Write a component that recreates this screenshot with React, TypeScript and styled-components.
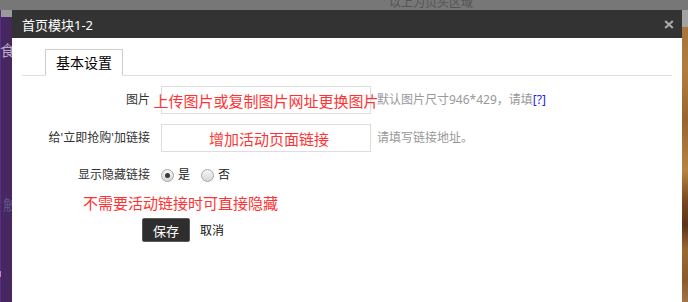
import React, { useState } from 'react';
import styled, { createGlobalStyle } from 'styled-components';

const GlobalStyle = createGlobalStyle`
  html, body {
    margin: 0;
    padding: 0;
    background: #ffffff;
  }
  body {
    font-family: "Noto Sans", "Noto Sans CJK SC", sans-serif;
    font-size: 12px;
    color: #333333;
  }
`;

const Page = styled.div`
  width: 688px;
  height: 302px;
  overflow: hidden;
  display: grid;
  grid-template-rows: 10px 1fr;
`;

const TopStrip = styled.div`
  background: #777777;
  overflow: hidden;
  padding-left: 389px;
`;

const TopText = styled.div`
  margin-top: -4px;
  font-size: 12px;
  line-height: 12px;
  color: #555555;
  font-family: "Noto Sans CJK SC", sans-serif;
`;

const Main = styled.div`
  display: flex;
  height: 292px;
`;

const LeftRail = styled.div`
  width: 12px;
  flex: none;
  overflow: hidden;
  display: flex;
  flex-direction: column;
  background: linear-gradient(#9a9a9a 0 7px, #46275f 7px);
  box-shadow: inset 1px 0 0 #5a2a8e;
`;

const RailGlyph = styled.span<{ $top: number; $color: string }>`
  display: block;
  margin-top: ${(p) => p.$top}px;
  margin-left: ${(p) => (p.$color === 'dim' ? 3 : 0)}px;
  font-family: "Noto Sans CJK SC", sans-serif;
  font-size: 15px;
  line-height: 17px;
  white-space: nowrap;
  color: ${(p) => (p.$color === 'dim' ? '#62528a' : '#b9abc9')};
`;

const RailMark = styled.span`
  display: block;
  margin-top: 59px;
  width: 1px;
  height: 6px;
  background: #d47cc8;
`;

const RightRail = styled.div`
  width: 6px;
  flex: none;
  background: linear-gradient(
    #a2a2a2 0 17px,
    #a8743a 17px,
    #b27c40 60px,
    #9a6430 110px,
    #b88444 160px,
    #7a4a22 190px,
    #5a3418 215px,
    #9a6834 240px,
    #8a5a2c 270px,
    #a0764a 292px
  );
`;

const Modal = styled.div`
  width: 670px;
  flex: none;
  background: #ffffff;
  display: flex;
  flex-direction: column;
`;

const Header = styled.div`
  height: 28px;
  background: #333333;
  display: flex;
  align-items: center;
  justify-content: space-between;
  padding: 0 8px 0 10px;
  color: #ffffff;
  font-size: 13px;
  font-family: "Noto Sans", "Noto Sans CJK SC", sans-serif;
`;

const CloseButton = styled.button`
  border: 0;
  padding: 0;
  background: none;
  width: 10px;
  height: 10px;
  display: flex;
  align-items: center;
  justify-content: center;
  cursor: pointer;
`;

const Body = styled.div`
  padding: 11px 10px 0;
`;

const TabBar = styled.div`
  display: flex;
  padding-left: 23px;
  border-bottom: 1px solid #dddddd;
`;

const Tab = styled.div`
  height: 25px;
  margin-bottom: -1px;
  padding: 0 10px;
  border: 1px solid #cccccc;
  border-bottom: 1px solid #ffffff;
  background: #ffffff;
  font-size: 14px;
  line-height: 25px;
  color: #000000;
  font-family: "Noto Sans CJK SC", sans-serif;
`;

const Form = styled.div`
  display: flex;
  flex-direction: column;
  padding-top: 10px;
`;

const Row = styled.div<{ $gap: number }>`
  display: flex;
  align-items: center;
  margin-top: ${(p) => p.$gap}px;
`;

const Label = styled.div`
  width: 128px;
  flex: none;
  text-align: right;
  margin-right: 11px;
  font-size: 12px;
  line-height: 20px;
  color: #333333;
  white-space: nowrap;
`;

const InputBox = styled.div<{ $pad: number }>`
  box-sizing: border-box;
  width: 210px;
  height: 28px;
  flex: none;
  border: 1px solid #dddddd;
  display: flex;
  align-items: center;
  justify-content: center;
  padding-left: ${(p) => p.$pad}px;
  color: #ff3333;
  font-size: 15px;
  white-space: nowrap;
  font-family: "Noto Sans CJK SC", sans-serif;
`;

const Hint = styled.div`
  margin-left: 6px;
  font-size: 12px;
  line-height: 20px;
  color: #999999;
  white-space: nowrap;
`;

const HelpLink = styled.a`
  color: #2222ee;
  text-decoration: none;
`;

const RadioGroup = styled.div`
  display: flex;
  align-items: center;
`;

const RadioOption = styled.label`
  display: flex;
  align-items: center;
  margin-right: 11px;
  font-size: 12px;
  line-height: 20px;
  color: #222222;
  cursor: pointer;
`;

const RadioDot = styled.span<{ $checked: boolean }>`
  box-sizing: border-box;
  width: 13px;
  height: 13px;
  margin-right: 4px;
  border-radius: 50%;
  border: 1px solid #a6a6a6;
  background: linear-gradient(#f6f6f6, #d6d6d6);
  display: flex;
  align-items: center;
  justify-content: center;

  &::after {
    content: '';
    width: 5px;
    height: 5px;
    border-radius: 50%;
    background: ${(p) => (p.$checked ? '#3a3a3a' : 'transparent')};
  }
`;

const Note = styled.div`
  margin-top: 8px;
  padding-left: 61px;
  color: #ff3333;
  font-size: 15px;
  line-height: 20px;
  font-family: "Noto Sans CJK SC", sans-serif;
`;

const Actions = styled.div`
  display: flex;
  align-items: center;
  margin-top: 5px;
  padding-left: 120px;
`;

const SaveButton = styled.button`
  box-sizing: border-box;
  width: 48px;
  height: 24px;
  border: 1px solid #5a5a5a;
  border-radius: 2px;
  background: #2e2e2e;
  color: #ffffff;
  font-size: 13px;
  font-family: "Noto Sans CJK SC", sans-serif;
  padding: 0;
  cursor: pointer;
`;

const CancelLink = styled.a`
  margin-left: 10px;
  font-size: 12px;
  color: #111111;
  cursor: pointer;
`;

export default function App() {
  const [visible, setVisible] = useState(true);

  return (
    <>
      <GlobalStyle />
      <Page>
        <TopStrip>
          <TopText>以上为页头区域</TopText>
        </TopStrip>
        <Main>
          <LeftRail>
            <RailGlyph $top={31} $color="light">食</RailGlyph>
            <RailGlyph $top={137} $color="dim">触</RailGlyph>
            <RailMark />
          </LeftRail>
          <Modal>
            <Header>
              <span>首页模块1-2</span>
              <CloseButton aria-label="关闭">
                <svg width="10" height="9" viewBox="0 0 10 9">
                  <path
                    d="M1.2 1 L8.8 8 M8.8 1 L1.2 8"
                    stroke="#a8a8a8"
                    strokeWidth="2.2"
                    fill="none"
                  />
                </svg>
              </CloseButton>
            </Header>
            <Body>
              <TabBar>
                <Tab>基本设置</Tab>
              </TabBar>
              <Form>
                <Row $gap={0}>
                  <Label>图片</Label>
                  <InputBox $pad={0}>上传图片或复制图片网址更换图片</InputBox>
                  <Hint>
                    默认图片尺寸946*429，请填<HelpLink>[?]</HelpLink>
                  </Hint>
                </Row>
                <Row $gap={10}>
                  <Label>给'立即抢购'加链接</Label>
                  <InputBox $pad={6}>增加活动页面链接</InputBox>
                  <Hint>请填写链接地址。</Hint>
                </Row>
                <Row $gap={13}>
                  <Label>显示隐藏链接</Label>
                  <RadioGroup>
                    <RadioOption onClick={() => setVisible(true)}>
                      <RadioDot $checked={visible} />是
                    </RadioOption>
                    <RadioOption onClick={() => setVisible(false)}>
                      <RadioDot $checked={!visible} />否
                    </RadioOption>
                  </RadioGroup>
                </Row>
                <Note>不需要活动链接时可直接隐藏</Note>
                <Actions>
                  <SaveButton>保存</SaveButton>
                  <CancelLink>取消</CancelLink>
                </Actions>
              </Form>
            </Body>
          </Modal>
          <RightRail />
        </Main>
      </Page>
    </>
  );
}
